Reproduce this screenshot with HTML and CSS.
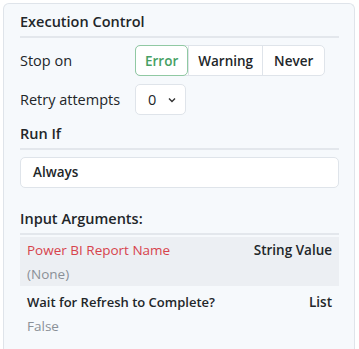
FILE: index.html
```html
<!DOCTYPE html>
<html lang="en">
<head>
  <meta charset="UTF-8">
  <meta name="viewport" content="width=device-width, initial-scale=1.0">
  <title>Execution Control</title>
  <link rel="stylesheet" href="styles.css">
</head>
<body>
  <div class="panel">
    <h2 class="section-title">Execution Control</h2>
    <div class="field-row">
      <span class="field-label">Stop on</span>
      <div class="btn-group">
        <button class="seg-btn active">Error</button>
        <button class="seg-btn">Warning</button>
        <button class="seg-btn">Never</button>
      </div>
    </div>
    <div class="field-row">
      <span class="field-label">Retry attempts</span>
      <div class="select-box">
        <span>0</span>
        <svg class="chevron" width="8" height="6" viewBox="0 0 8 6"><path d="M1 1.5 L4 4.5 L7 1.5" fill="none" stroke="#333" stroke-width="1.4"/></svg>
      </div>
    </div>

    <h2 class="section-title run-if">Run If</h2>
    <div class="text-box">Always</div>

    <h2 class="section-title args-title">Input Arguments:</h2>
    <div class="arg-list">
      <div class="arg-row selected">
        <div class="arg-head">
          <span class="arg-name error">Power BI Report Name</span>
          <span class="arg-type">String Value</span>
        </div>
        <div class="arg-value">(None)</div>
      </div>
      <div class="arg-row">
        <div class="arg-head">
          <span class="arg-name">Wait for Refresh to Complete?</span>
          <span class="arg-type">List</span>
        </div>
        <div class="arg-value">False</div>
      </div>
    </div>
  </div>
</body>
</html>
```

FILE: styles.css
```css
body {
    margin: 0;
    padding: 3px 4px 0 3px;
    background: #ffffff;
    font-family: "Open Sans", "Noto Sans", sans-serif;
    color: #222629;
    overflow: hidden;
}

.panel {
    box-sizing: border-box;
    height: 346px;
    background: #f6f9fc;
    border: 1px solid #dfe4ea;
    border-bottom: none;
    border-radius: 6px 6px 0 0;
    padding: 8px 15px 0 16px;
}

.section-title {
    margin: 0;
    font-size: 14.5px;
    font-weight: 600;
    line-height: 20px;
    padding-bottom: 4px;
    border-bottom: 2px solid #e3e7ec;
}

.field-row {
    display: flex;
    align-items: center;
    margin-top: 7px;
}

.field-row + .field-row {
    margin-top: 8px;
}

.field-label {
    width: 115px;
    font-size: 14.5px;
}

.btn-group {
    display: flex;
    border: 1px solid #dfe4ea;
    border-radius: 5px;
    background: #ffffff;
    height: 29px;
}

.seg-btn {
    font-family: inherit;
    font-size: 13.5px;
    font-weight: 600;
    color: #222629;
    background: transparent;
    border: none;
    border-left: 1px solid #dfe4ea;
    padding: 0 9px;
}

.seg-btn:first-child {
    border-left: none;
}

.seg-btn:last-child {
    padding: 0 11px;
}

.seg-btn.active {
    color: #46a064;
    border: 1px solid #90c9a3;
    border-radius: 5px;
    margin: -1px 0 -1px -1px;
    padding: 0 9px;
}

.select-box {
    display: flex;
    align-items: center;
    gap: 12px;
    height: 29px;
    padding: 0 9px 0 12px;
    border: 1px solid #dfe4ea;
    border-radius: 5px;
    background: #ffffff;
    font-size: 14.5px;
    font-weight: 500;
}

.run-if {
    margin-top: 9px;
}

.text-box {
    margin-top: 7px;
    height: 29px;
    line-height: 29px;
    padding-left: 12px;
    border: 1px solid #dfe4ea;
    border-radius: 5px;
    background: #ffffff;
    font-size: 13.5px;
    font-weight: 600;
}

.args-title {
    margin-top: 21px;
}

.arg-list {
    margin-top: 2px;
}

.arg-row {
    padding: 3px 7px 2px 7px;
    margin-bottom: 3px;
}

.arg-row.selected {
    background: #eceff3;
}

.arg-head {
    display: flex;
    justify-content: space-between;
    font-size: 13.5px;
    font-weight: 600;
    line-height: 20px;
}

.arg-name {
    font-size: 13px;
}

.arg-name.error {
    color: #d7434c;
    font-size: 13.5px;
    font-weight: 400;
}

.arg-value {
    margin-top: 4px;
    font-size: 13.5px;
    color: #8a9097;
    line-height: 20px;
}
```
